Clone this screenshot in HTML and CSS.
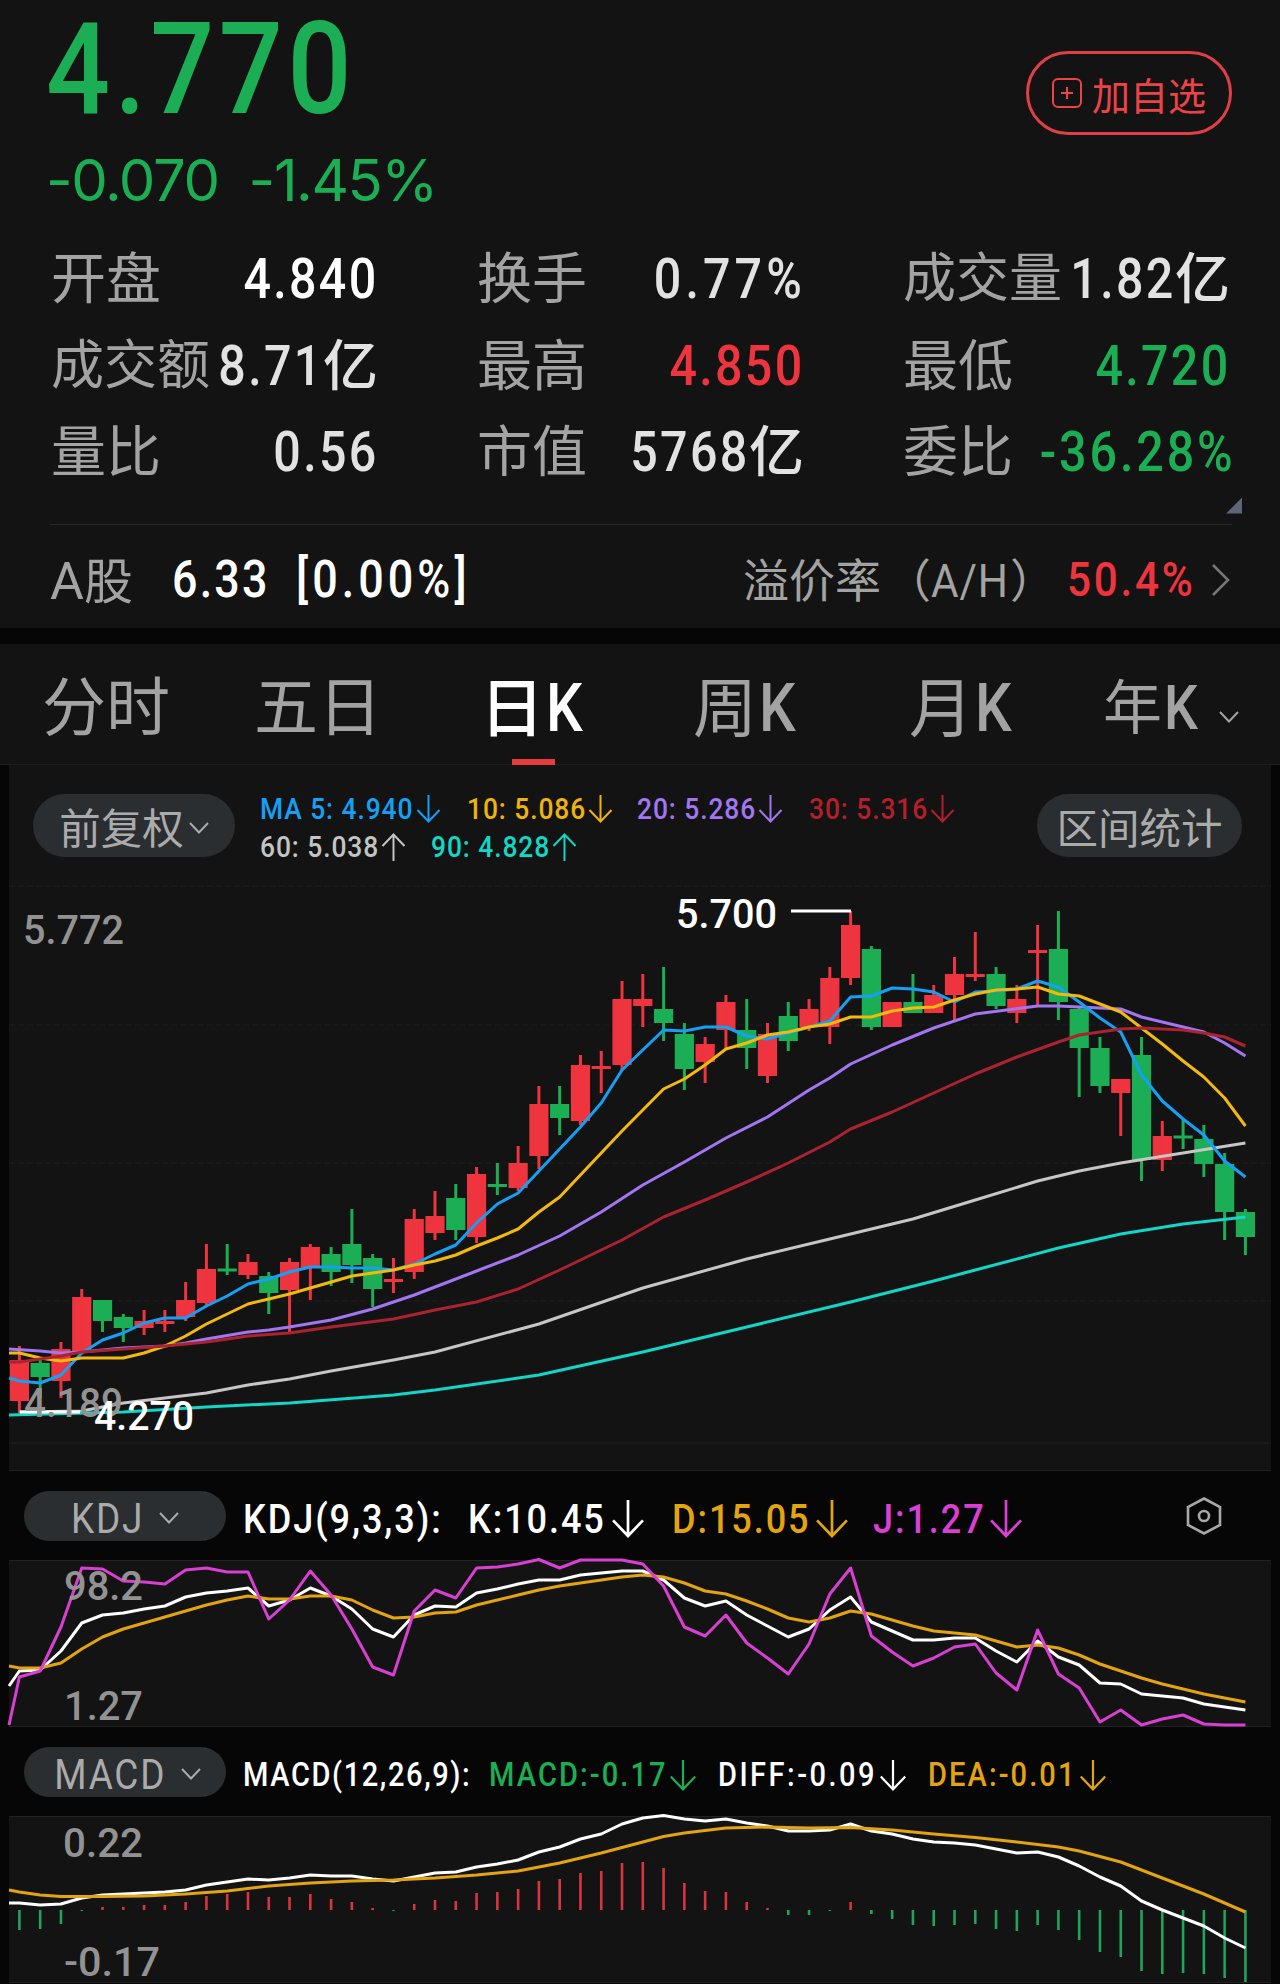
FILE: index.html
```html
<!DOCTYPE html>
<html lang="zh-CN">
<head>
    <meta charset="utf-8">
    <title>日K</title>
    <link rel="stylesheet" href="styles.css">
</head>
<body>
    <!-- shared icons -->
    <svg class="defs">
        <symbol id="down" viewBox="0 0 24 28"><path d="M12 0V26M1 15L12 26.5L23 15"/></symbol>
        <symbol id="up" viewBox="0 0 24 28"><path d="M12 28V2M1 13L12 1.5L23 13"/></symbol>
        <symbol id="chevron" viewBox="0 0 20 12"><path d="M1 1L10 10.5L19 1"/></symbol>
    </svg>

    <!-- Quote -->
    <div class="quote">
        <div class="top">
            <div>
                <div class="price din">4.770</div>
                <div class="change"><span>-0.070</span><span>-1.45%</span></div>
            </div>
            <button class="add">
                <svg width="30" height="30" viewBox="0 0 30 30"><rect x="1" y="1" width="28" height="28" rx="5"/><path d="M15 9V21M9 15H21"/></svg>
                加自选
            </button>
        </div>
        <div class="stats">
            <div class="stat"><label>开盘</label><b class="din white">4.840</b></div>
            <div class="stat"><label>换手</label><b class="din wide">0.77%</b></div>
            <div class="stat"><label class="long">成交量</label><b><span class="din">1.82</span>亿</b></div>
            <div class="stat"><label class="long">成交额</label><b><span class="din">8.71</span>亿</b></div>
            <div class="stat"><label>最高</label><b class="din red">4.850</b></div>
            <div class="stat"><label>最低</label><b class="din green">4.720</b></div>
            <div class="stat"><label>量比</label><b class="din">0.56</b></div>
            <div class="stat"><label>市值</label><b><span class="din">5768</span>亿</b></div>
            <div class="stat"><label>委比</label><b class="din green ratio">-36.28%</b></div>
        </div>
        <div class="more"></div>
        <div class="ashare">
            <span class="name"><span class="din">A</span>股</span>
            <span class="din last">6.33</span>
            <span class="din pct">[0.00%]</span>
            <span class="premium">溢价率</span>
            <span class="ah">（<span class="din">A/H</span>）</span>
            <span class="din rate">50.4%</span>
            <svg width="19" height="32" viewBox="0 0 19 32"><path d="M2 1L17 16L2 31"/></svg>
        </div>
    </div>

    <!-- Period tabs -->
    <div class="tabs">
        <div class="tab">分时</div>
        <div class="tab">五日</div>
        <div class="tab active">日<span class="din">K</span></div>
        <div class="tab">周<span class="din">K</span></div>
        <div class="tab">月<span class="din">K</span></div>
        <div class="tab year">年<span class="din">K</span><svg class="chev"><use href="#chevron"/></svg></div>
    </div>

    <!-- Candles -->
    <div class="panel main">
        <div class="toolbar">
            <button class="pill">前复权<svg class="chev"><use href="#chevron"/></svg></button>
            <div class="ma">
                <div class="item blue"><span class="din">MA 5: 4.940</span><svg><use href="#down"/></svg></div>
                <div class="item yellow"><span class="din">10: 5.086</span><svg><use href="#down"/></svg></div>
                <div class="item purple"><span class="din">20: 5.286</span><svg><use href="#down"/></svg></div>
                <div class="item crimson"><span class="din">30: 5.316</span><svg><use href="#down"/></svg></div>
                <div class="item silver"><span class="din">60: 5.038</span><svg><use href="#up"/></svg></div>
                <div class="item teal"><span class="din">90: 4.828</span><svg><use href="#up"/></svg></div>
            </div>
            <button class="pill range">区间统计</button>
        </div>
        <svg id="candles" width="1262" height="590" viewBox="9 881 1262 590"></svg>
    </div>

    <!-- KDJ -->
    <div class="bar kdj">
        <button class="pill small"><span class="din">KDJ</span><svg class="chev"><use href="#chevron"/></svg></button>
        <div class="item title"><span class="din">KDJ(9,3,3):</span></div>
        <div class="item white"><span class="din">K:10.45</span><svg><use href="#down"/></svg></div>
        <div class="item gold"><span class="din">D:15.05</span><svg><use href="#down"/></svg></div>
        <div class="item pink"><span class="din">J:1.27</span><svg><use href="#down"/></svg></div>
        <svg class="gear" width="36" height="38" viewBox="0 0 36 38"><path d="M18 1.5L34 10V28L18 36.5L2 28V10Z"/><circle cx="18" cy="19" r="5"/></svg>
    </div>
    <div class="panel sub"><svg id="kdj" width="1262" height="167" viewBox="9 1560 1262 167"></svg></div>

    <!-- MACD -->
    <div class="bar macd">
        <button class="pill small"><span class="din">MACD</span><svg class="chev"><use href="#chevron"/></svg></button>
        <div class="item title"><span class="din">MACD(12,26,9):</span></div>
        <div class="item green"><span class="din">MACD:-0.17</span><svg><use href="#down"/></svg></div>
        <div class="item white"><span class="din">DIFF:-0.09</span><svg><use href="#down"/></svg></div>
        <div class="item gold"><span class="din">DEA:-0.01</span><svg><use href="#down"/></svg></div>
    </div>
    <div class="panel sub"><svg id="macd" width="1262" height="167" viewBox="9 1816 1262 167"></svg></div>

    <script src="chart.js"></script>
</body>
</html>
```
FILE: styles.css
```css
body {
    margin: 0;
    width: 1280px;
    height: 1984px;
    overflow: hidden;
    background: #060606;
    color: #a3a3a3;
    font-family: Roboto, "Noto Sans CJK SC", sans-serif;
}
button {
    margin: 0;
    padding: 0;
    border: none;
    background: none;
    color: inherit;
    font-family: inherit;
}
svg {
    display: block;
    fill: none;
    stroke: currentColor;
    overflow: visible;
}
.defs {
    position: absolute;
    width: 0;
    height: 0;
}
/* narrow figures */
.din {
    display: inline-block;
    transform: scaleX(0.88);
    transform-origin: 0 50%;
    letter-spacing: 0.048em;
    white-space: pre;
    font-family: Roboto, sans-serif;
    font-weight: 500;
}
.white { color: #fff; }
.red { color: #ee343e; }
.green { color: #1bae54; }
.blue { color: #14a0f5; }
.yellow { color: #eeb40c; }
.gold { color: #e3a40f; }
.purple { color: #a276f2; }
.crimson { color: #b3202a; }
.silver { color: #c4c4c4; }
.teal { color: #12d6c6; }
.pink { color: #d93fd3; }

/* quote */
.quote {
    height: 628px;
    box-sizing: border-box;
    background: #131313;
}
.top {
    display: flex;
    justify-content: space-between;
    height: 235px;
    padding: 0 48px 0 46px;
}
.price {
    height: 139px;
    line-height: 139px;
    font-size: 128px;
    letter-spacing: 0.04em;
    color: #1bae54;
}
.change {
    display: flex;
    gap: 30px;
    font-family: Inter, sans-serif;
    font-size: 58px;
    line-height: 82px;
    letter-spacing: -1.4px;
    color: #1bae54;
}
.add {
    display: flex;
    align-items: center;
    justify-content: center;
    gap: 10px;
    width: 206px;
    height: 84px;
    margin-top: 51px;
    box-sizing: border-box;
    border: 3px solid #df4046;
    border-radius: 42px;
    color: #ee4249;
    font-size: 38px;
}
.add svg {
    stroke-width: 2;
}
.stats {
    display: grid;
    grid-template-columns: repeat(3, 325px);
    grid-auto-rows: 86.5px;
    column-gap: 101px;
    padding-left: 51px;
}
.stat {
    display: flex;
    justify-content: space-between;
    line-height: 87.5px;
    white-space: nowrap;
}
.stat label {
    padding-top: 1px;
    font-size: 55px;
}
.stat label.long {
    font-size: 53px;
}
.stat b {
    padding-top: 1px;
    color: #e2e2e2;
    font-size: 55px;
    font-weight: 500;
}
.stat .din {
    transform-origin: 100% 50%;
    margin-right: -3px;
}
.stat b .din {
    margin: 0 -1px 0 -15px;
}
.stat b:not(.din) {
    margin-right: -2px;
}
.stat .wide { letter-spacing: 0.085em; margin-right: -4px; }
.stat .ratio { letter-spacing: 0.06em; margin-right: -1px; }
.stat b.white { color: #fff; }
.stat b.red { color: #ee343e; }
.stat b.green { color: #1bae54; }
.more {
    width: 16px;
    height: 16px;
    margin: 3px 0 10px 1226px;
    background: #5d6676;
    clip-path: polygon(100% 0, 100% 100%, 0 100%);
}
.ashare {
    display: flex;
    align-items: center;
    height: 104px;
    margin: 0 48px 0 50px;
    padding-top: 7px;
    box-sizing: border-box;
    border-top: 1px solid #292929;
    font-size: 49px;
    white-space: nowrap;
}
.ashare > * {
    flex: none;
}
.name { width: 122px; margin-top: -5px; }
.name .din { width: 34px; font-size: 52px; font-weight: 400; transform: none; }
.ashare .last, .ashare .pct {
    width: 124px;
    color: #fff;
    font-size: 51px;
}
.ashare .pct { width: 447px; letter-spacing: 0.09em; }
.premium { width: 146px; margin-top: -6px; font-size: 46px; }
.ah { width: 178px; margin: -6px 0 0 -4px; font-size: 46px; }
.ah .din { width: 79px; font-weight: 400; letter-spacing: 0.02em; transform: scaleX(0.92); }
.ashare .rate {
    width: 144px;
    margin-left: 4px;
    color: #ee343e;
    font-size: 48px;
    letter-spacing: 0.065em;
}
.ashare svg {
    stroke: #777;
    stroke-width: 2.5;
}

/* tabs */
.tabs {
    display: grid;
    grid-template-columns: 212px 226px 213px 216px 194px auto;
    height: 121px;
    margin-top: 16px;
    padding-left: 42px;
    box-sizing: border-box;
    border-bottom: 1px solid #1f1f1f;
    background: #131313;
    line-height: 130px;
    font-size: 64px;
}
.tab .din {
    margin-left: 2px;
    font-size: 66px;
    letter-spacing: 0;
}
.tab.active {
    color: #fff;
    font-weight: 500;
}
.tab.active::after {
    content: "";
    display: block;
    width: 43px;
    height: 6px;
    margin: -16px 0 0 32px;
    background: #e73c3e;
}
.tab.year {
    display: flex;
    font-size: 59px;
    line-height: 129px;
}
.year .din {
    font-size: 61px;
}
.chev {
    width: 20px;
    height: 12px;
    stroke-width: 2;
}
.year .chev {
    margin: 67px 0 0 16px;
}

/* chart panels */
.panel {
    width: 1262px;
    margin: 0 9px;
    background: #131313;
}
.main {
    height: 706px;
}
.toolbar {
    display: flex;
    height: 116px;
    padding: 29px 29px 0 24px;
    box-sizing: border-box;
}
.pill {
    display: flex;
    align-items: center;
    justify-content: center;
    gap: 5px;
    width: 202px;
    height: 63px;
    flex: none;
    border-radius: 32px;
    background: #2a2e31;
    color: #ababab;
    font-size: 41.5px;
}
.pill .chev {
    margin-top: 4px;
}
.range {
    width: 205px;
}
.ma {
    display: grid;
    grid-template-columns: 207px 170px 172px 228px;
    grid-auto-rows: 38px;
    width: 777px;
    margin: -4px 0 0 25px;
    font-size: 30px;
}
.item {
    display: flex;
    align-items: center;
    flex: none;
    line-height: 38px;
}
.item .din {
    width: 121px;
}
.ma .din {
    letter-spacing: 0.035em;
}
.ma .blue .din {
    width: 156px;
}
.ma .teal {
    margin-left: -36px;
}
.item svg {
    width: 25px;
    height: 28px;
    stroke-width: 2;
}

/* indicator bars */
.bar {
    display: flex;
    align-items: center;
    height: 89px;
    padding-left: 24px;
}
.small {
    height: 50px;
    gap: 14px;
    margin-right: 17px;
}
.small .din {
    margin: 5px 0 0 -10px;
    font-weight: 400;
    font-size: 42px;
    transform-origin: 100% 50%;
}
.bar .item {
    padding-top: 6px;
}
.kdj { font-size: 41px; }
.kdj .title { width: 225px; color: #fff; }
.kdj .title .din { letter-spacing: 0.06em; }
.kdj .item .din { width: 143px; letter-spacing: 0.053em; }
.kdj .item.white { width: 204px; }
.kdj .item.gold { width: 201px; }
.kdj .item.pink .din { width: 116px; }
.kdj .item svg { width: 34px; height: 38px; }
.kdj .item.pink { width: 313px; }
.gear {
    color: #a8a8a8;
    stroke-width: 2.6;
}
.macd { font-size: 33px; }
.macd .item .din { letter-spacing: 0.072em; }
.macd .title { width: 246px; color: #fff; }
.macd .item.title .din { letter-spacing: 0.055em; }
.macd .green { width: 229px; }
.macd .green .din { width: 180px; }
.macd .item.white { width: 210px; }
.macd .item.white .din { width: 161px; letter-spacing: 0.085em; }
.macd .gold .din { width: 151px; }
.macd .item svg { width: 28px; height: 31px; margin-top: 2px; }
.sub {
    height: 167px;
}
#candles text, #kdj text, #macd text {
    font-family: Roboto, sans-serif;
    font-size: 41px;
    stroke: none;
}
```
FILE: chart.js
```javascript
const RED = '#ee343e', GREEN = '#1bae54', GOLD = '#e3a40f', PINK = '#d93fd3';
const NS = 'http://www.w3.org/2000/svg';
const STEP = 20.78;
const X = i => 19.4 + i * STEP;

function add(svg, tag, attrs, text) {
    const el = document.createElementNS(NS, tag);
    for (const k in attrs) el.setAttribute(k, attrs[k]);
    if (text) el.textContent = text;
    svg.appendChild(el);
}

function hline(svg, y, dash, color) {
    add(svg, 'path', { d: `M9 ${y}H1271`, stroke: color || '#222', 'stroke-dasharray': dash || 'none' });
}

function label(svg, text, x, y, width, color, weight) {
    add(svg, 'text', { x, y, fill: color, 'font-weight': weight || 400, textLength: width, lengthAdjust: 'spacingAndGlyphs' }, text);
}

// points: one value per bar, first is the left edge
function series(svg, points, color) {
    const d = points.map((y, i) => `${i ? X(i - 1) : 9},${y}`).join(' ');
    add(svg, 'polyline', { points: d, stroke: color, 'stroke-width': 3, 'stroke-linejoin': 'round' });
}

// points: [bar, value] pairs
function sparse(svg, points, color) {
    const d = points.map(p => `${X(p[0])},${p[1]}`).join(' ');
    add(svg, 'polyline', { points: d, stroke: color, 'stroke-width': 3, 'stroke-linejoin': 'round' });
}

// up/down, high, body top, body bottom, low
const bars = [
    [1,1346,1360,1401,1413],[0,1357,1363,1377,1398],[1,1342,1349,1381,1398],[1,1289,1297,1351,1351],
    [0,1300,1300,1321,1332],[0,1314,1317,1328,1342],[1,1310,1321,1328,1335],[1,1310,1321,1324,1332],
    [1,1282,1300,1317,1321],[1,1244,1269,1303,1307],[0,1244,1268.5,1271.5,1275],[1,1254,1262,1275,1279],
    [0,1272,1276,1293,1314],[1,1258,1262,1290,1332],[1,1244,1247,1268,1300],[0,1247,1254,1272,1286],
    [0,1209,1244,1265,1283],[0,1254,1258,1289,1307],[1,1258,1279,1282,1293],[1,1209,1219,1272,1279],
    [1,1191,1216,1233,1240],[0,1184,1198,1230,1240],[1,1167,1174,1237,1243],[0,1163,1184,1187,1195],
    [1,1146,1163,1188,1191],[1,1086,1104,1156,1169],[0,1086,1104,1118,1135],[1,1055,1065,1121,1125],
    [1,1051,1066,1069,1093],[1,981,999,1065,1070],[1,974,999,1006,1027],[0,967,1009,1023,1041],
    [0,1023,1034,1069,1090],[1,1037,1044,1062,1083],[1,995,1002,1030,1048],[0,999,1030,1048,1069],
    [1,1023,1034,1076,1083],[0,1002,1016,1041,1051],[1,999,1009,1027,1031],[1,967,978,1027,1044],
    [1,911,925,978,985],[0,946,949,1027,1030],[1,1002,1002,1027,1027],[0,974,1002,1013,1013],
    [1,985,995,1013,1013],[1,957,974,995,1021],[1,932,974,977,981],[0,967,974,1006,1009],
    [1,985,999,1013,1023],[1,925,950,953,1007],[0,911,949,1002,1020],[0,1007,1009,1048,1097],
    [0,1037,1048,1086,1093],[1,1079,1079,1093,1136],[0,1037,1055,1160,1181],[1,1121,1136,1160,1171],
    [0,1120,1135.5,1138.5,1149],[0,1125,1139,1164,1177],[0,1153,1164,1212,1240],[0,1209,1212,1237,1255]
];
const ma5 = [1378,1381,1383,1375,1353,1340,1333,1323,1318,1318,1306,1296,1284,1279,1272,1267,1267,1268,1268,1270,1264,
    1254,1245,1223,1204,1193,1171,1149,1127,1103,1070,1050,1030,1031,1027,1027,1036,1039,1033,1027,1021,
    997,996,988,989,992,1002,992,991,989,981,987,1002,1018,1032,1075,1101,1119,1135,1161,1177];
const ma10 = [1353,1353,1358,1361,1358,1358,1358,1353,1346,1336,1324,1314,1304,1299,1294,1288,1282,1276,1273,1270,1265,
    1261,1255,1246,1238,1229,1212,1197,1175,1153,1131,1110,1089,1079,1065,1049,1043,1035,1032,1027,1024,
    1017,1017,1011,1008,1007,1000,994,990,989,987,994,996,1004,1012,1028,1044,1061,1077,1098,1126];
const ma20 = [[-.5,1349],[1,1351],[2,1353],[3,1352],[5,1348],[7,1346],[8,1343],[9,1339],[11,1332],[12,1330],[13,1327],
    [15,1320],[17,1309],[19,1295],[20,1287],[22,1271],[24,1255],[26,1236],[28,1212],[30,1185],[32,1162],[34,1138],
    [36,1117],[38,1090],[39,1078],[40,1064],[42,1045],[44,1028],[46,1014],[49,1006],[50,1006],[52,1008],[53,1009],[54,1017],
    [56,1027],[57,1032],[58,1043],[59,1056]];
const ma30 = [[-.5,1362],[0,1362],[1,1359],[2,1356],[3,1352],[7,1346],[9,1342],[11,1336],[13,1333],[15,1327],[18,1319],
    [20,1310],[22,1302],[24,1289],[26,1270],[28,1250],[29,1240],[31,1217],[33,1200],[35,1182],[37,1163],[39,1142],
    [40,1129],[42,1112],[44,1093],[46,1074],[48,1057],[50,1042],[51,1035],[53,1029],[54,1028],[56,1030],[57,1033],
    [58,1037],[59,1046]];
const ma60 = [[0,1412],[3,1411],[5,1403],[7,1398],[9,1393],[11,1385],[13,1379],[15,1371],[18,1360],[20,1352],[25,1324],
    [30,1288],[35,1259],[39,1239],[40,1234],[43,1219],[46,1200],[49,1181],[51,1171],[53,1163],[56,1153],[59,1143]];
const ma90 = [[-.5,1415],[5,1412],[9,1407],[13,1403],[18,1395],[20,1390],[25,1375],[30,1352],[35,1327],[40,1302],
    [44,1281],[46,1270],[50,1248],[53,1234],[56,1224],[59,1217]];

const main = document.getElementById('candles');
[886, 1025, 1163, 1301].forEach(y => hline(main, y, '6 3', '#1e1e1e'));
hline(main, 1443);
hline(main, 1470.5);
label(main, '5.772', 23, 944, 101, '#929292', 500);
bars.forEach((b, i) => {
    const color = b[0] ? RED : GREEN;
    const x = X(i);
    add(main, 'rect', { x: x - 9.6, y: b[2], width: 19.2, height: b[3] - b[2], fill: color, stroke: 'none' });
    add(main, 'path', { d: `M${x} ${b[1]}V${b[4]}`, stroke: color, 'stroke-width': 3 });
});
sparse(main, ma60, '#c6c6c6');
sparse(main, ma90, '#12d6c6');
sparse(main, ma20, '#a276f2');
series(main, ma5, '#14a0f5');
series(main, ma10, '#f3b90d');
sparse(main, ma30, '#ab2230');
add(main, 'path', { d: 'M791 911H851M20 1412H80', stroke: '#fff', 'stroke-width': 3 });
label(main, '4.189', 24, 1417, 99, '#929292', 500);
label(main, '5.700', 676, 928, 101, '#fff', 500);
label(main, '4.270', 94, 1430, 100, '#fff', 500);

const J = [1725,1677,1671,1627,1568,1569,1581,1582,1584,1570,1568,1572,1572,1619,1600,1571,1595,1629,1667,1675,1611,
    1590,1598,1568,1567,1564,1559.5,1568,1560,1560,1560,1564,1586,1627,1636,1615,1643,1658,1674,1644,1594,
    1568,1636,1652,1666,1658,1647,1644,1673,1690,1630,1674,1688,1722,1710,1725,1719,1715,1724,1725,1725];
const K = [1686,1671,1670,1651,1623,1615,1613,1609,1606,1597,1593,1591,1588,1606,1600,1588,1596,1609,1629,1637,1615,
    1606,1607,1593,1589,1584,1580,1580,1575,1573,1571,1571,1580,1598,1606,1601,1615,1626,1637,1629,1610,
    1597,1622,1631,1640,1640,1638,1638,1651,1662,1641,1657,1665,1683,1684,1694,1696,1698,1704,1707,1710];
const D = [1666,1668,1668,1663,1649,1637,1629,1623,1617,1611,1605,1600,1596,1599,1599,1596,1596,1600,1610,1618,1617,
    1613,1612,1605,1600,1595,1590,1586,1583,1580,1577,1575,1577,1583,1591,1594,1601,1609,1618,1622,1618,
    1611,1614,1620,1626,1631,1633,1635,1641,1647,1645,1648,1655,1664,1671,1678,1684,1689,1694,1698,1702];

const kdj = document.getElementById('kdj');
hline(kdj, 1560.5);
hline(kdj, 1726.5);
series(kdj, K, '#fff');
series(kdj, D, GOLD);
series(kdj, J, PINK);
label(kdj, '98.2', 64, 1600, 79, '#929292', 500);
label(kdj, '1.27', 64, 1720, 79, '#929292', 500);

const hist = [-20,-19,-14,-1,3,3,5,5,8,14,16,18,13,13,16,11,8,2,-1,6,10,9,17,18,21,29,31,37,39,47,48,42,27,19,18,8,2,
    -5,-5,-1,8,-4,-9,-15,-16,-15,-14,-19,-21,-15,-20,-30,-42,-47,-61,-64,-63,-64,-68,-72];
const diff = [1903,1903,1905,1904,1898,1895,1894,1893,1892,1890,1885,1882,1879,1880,1878,1875,1876,1876,1879,1881,1877,
    1873,1872,1867,1864,1860,1852,1847,1839,1834,1824,1818,1815.5,1819,1821,1819,1823,1826,1831,1831,1830,
    1824,1831,1834,1839,1842,1843,1845,1849,1853,1852,1857,1866,1877,1886,1901,1910,1918,1926,1938,1948];
const dea = [[-.5,1890],[0,1892],[1,1895],[2,1896.5],[4,1896.5],[6,1896],[8,1894],[10,1891],[12,1886],[14,1883],[16,1881],
    [18,1880],[20,1878],[22,1875],[24,1871],[26,1863],[28,1853],[30,1842],[31,1836.5],[32,1833],[34,1828],[36,1827],
    [38,1828],[40,1827.5],[42,1830],[44,1834],[46,1837.5],[48,1842],[50,1847],[51,1851],[53,1862],[55,1878],
    [57,1894],[59,1912]];

const macd = document.getElementById('macd');
hline(macd, 1816.5);
hline(macd, 1982.5);
hist.forEach((h, i) => add(macd, 'path', {
    d: `M${X(i)} 1910V${1910 - h}`, stroke: h > 0 ? '#d9353e' : '#20a35a', 'stroke-width': 2.6
}));
series(macd, diff, '#fff');
sparse(macd, dea, GOLD);
label(macd, '0.22', 63, 1857, 80, '#929292', 500);
label(macd, '-0.17', 64, 1976, 96, '#929292', 500);
```
